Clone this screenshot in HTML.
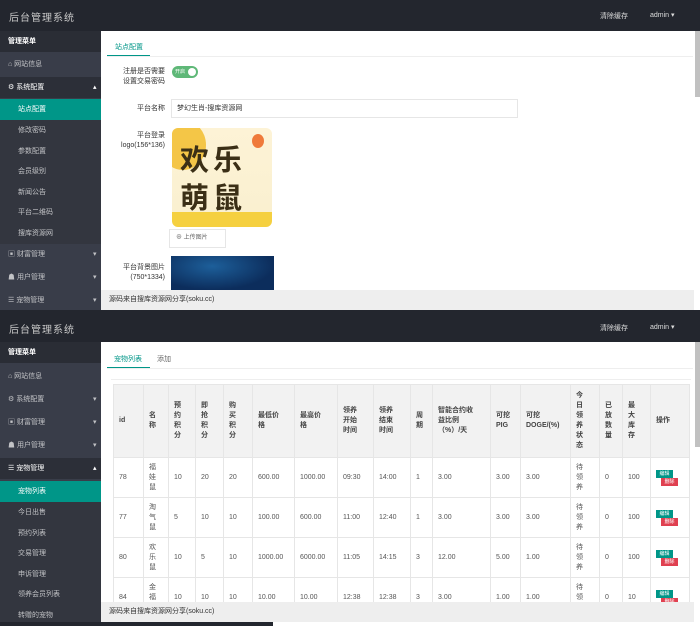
<!DOCTYPE html>
<html><head><meta charset="utf-8"><style>
*{margin:0;padding:0;box-sizing:border-box}
body{width:700px;height:626px;overflow:hidden;background:#fff;font-family:"Liberation Sans","Noto Sans CJK SC",sans-serif;font-size:7px;color:#333;position:relative}
.a{position:absolute}
.hdr{background:#23262e;color:#cfd0d3;left:0;width:700px}
.title{font-size:10px;color:#c8c8c8;letter-spacing:1px}
.side{background:#393d49;left:0;width:101px;color:#c2c3c6}
.side div{position:absolute;left:0;width:101px;height:21px;line-height:21px;padding-left:8px;font-size:7px}
.side .mh{background:#2a2d35;color:#fff;font-weight:bold}
.side .pd{background:#2c2f38;color:#fff}
.side .sub{padding-left:18px;background:#33363f}
.side .on{background:#009688;color:#fff}
.side .ar{position:absolute;right:8px;left:auto;width:0;padding:0}
.foot{background:#eeeeee;left:101px;width:593px;height:20px;line-height:20px;padding-left:8px;font-size:7px;color:#333}
.sb{background:#c1c1c1;width:5px;left:695px}
.lbl{text-align:right;width:70px;left:95px;font-size:7px;line-height:10px;color:#333}
table{border-collapse:collapse;table-layout:fixed;font-size:7px;color:#555}
td,th{border:1px solid #e6e6e6;padding:0 0 0 5px;text-align:left;vertical-align:middle;line-height:10px}
th{background:#f2f2f2;font-weight:bold;color:#444;height:73px}
td{height:40px}
.be{display:block;background:#009688;color:#fff;font-size:5px;width:17px;height:8px;line-height:8px;text-align:center;margin-left:0}
.bd{display:block;background:#e04050;color:#fff;font-size:5px;width:17px;height:8px;line-height:8px;text-align:center;margin-left:5px}
</style></head><body>

<div class="a hdr" style="top:0;height:31px"></div>
<div class="a title" style="left:9px;top:9px">后台管理系统</div>
<div class="a" style="left:600px;top:11px;color:#ddd;font-size:7px">清除缓存</div>
<div class="a" style="left:650px;top:11px;color:#ddd;font-size:7px">admin ▾</div>
<div class="a side" style="top:31px;height:279px">
 <div class="mh" style="top:0">管理菜单</div>
 <div style="top:23px">⌂ 网站信息</div>
 <div class="pd" style="top:46px">⚙ 系统配置<span class="ar" style="top:0">▴</span></div>
 <div class="on sub" style="top:68px">站点配置</div>
 <div class="sub" style="top:89px">修改密码</div>
 <div class="sub" style="top:110px">参数配置</div>
 <div class="sub" style="top:130px">会员级别</div>
 <div class="sub" style="top:151px">新闻公告</div>
 <div class="sub" style="top:171px">平台二维码</div>
 <div class="sub" style="top:192px">搜库资源网</div>
 <div style="top:213px">▣ 财富管理<span class="ar">▾</span></div>
 <div style="top:236px">☗ 用户管理<span class="ar">▾</span></div>
 <div style="top:259px">☰ 宠物管理<span class="ar">▾</span></div>
</div>
<div class="a" style="left:101px;top:31px;width:594px;height:259px;background:#fff"></div>
<div class="a" style="left:115px;top:42px;color:#009688;font-size:7px">站点配置</div>
<div class="a" style="left:107px;top:55px;width:43px;height:2px;background:#009688"></div>
<div class="a" style="left:107px;top:56px;width:586px;height:1px;background:#eee"></div>
<div class="a lbl" style="top:67px">注册是否需要<br>设置交易密码</div>
<div class="a" style="left:172px;top:66px;width:26px;height:12px;border-radius:6px;background:#5fb878;color:#fff;font-size:5px;line-height:12px;padding-left:3px">开启<span style="position:absolute;right:2px;top:2px;width:8px;height:8px;border-radius:50%;background:#fff"></span></div>
<div class="a lbl" style="top:104px">平台名称</div>
<div class="a" style="left:171px;top:99px;width:347px;height:19px;border:1px solid #e6e6e6;padding-left:5px;line-height:17px;font-size:7px">梦幻生肖-搜库资源网</div>
<div class="a lbl" style="top:131px">平台登录<br>logo(156*136)</div>
<div class="a" style="left:172px;top:128px;width:100px;height:99px;border-radius:6px;background:linear-gradient(#fdf3d6 0,#faf0d0 85%,#f5d040 85%);overflow:hidden">
 <div style="position:absolute;left:-12px;top:-8px;width:46px;height:50px;border-radius:50%;background:#f2bd2e;opacity:.85"></div>
 <div style="position:absolute;left:80px;top:6px;width:12px;height:14px;border-radius:50%;background:#ef7a3a"></div>
 <div style="position:absolute;left:8px;top:14px;font-size:29px;line-height:38px;font-weight:bold;color:#3b2f16;letter-spacing:4px">欢乐<br>萌鼠</div>
</div>
<div class="a" style="left:169px;top:229px;width:57px;height:19px;border:1px solid #e6e6e6;font-size:6px;line-height:17px;padding-left:6px;color:#666">⊕ 上传图片</div>
<div class="a lbl" style="top:263px">平台背景图片<br>(750*1334)</div>
<div class="a" style="left:171px;top:256px;width:103px;height:34px;background:radial-gradient(ellipse at 40% 30%,#1d5f9a,#0c2d5c 70%)"></div>
<div class="a foot" style="top:290px">源码来自搜库资源网分享(soku.cc)</div>
<div class="a sb" style="top:31px;height:66px"></div>

<div class="a hdr" style="top:310px;height:32px"></div>
<div class="a title" style="left:9px;top:321px">后台管理系统</div>
<div class="a" style="left:600px;top:323px;color:#ddd;font-size:7px">清除缓存</div>
<div class="a" style="left:650px;top:323px;color:#ddd;font-size:7px">admin ▾</div>
<div class="a side" style="top:342px;height:280px">
 <div class="mh" style="top:0">管理菜单</div>
 <div style="top:24px">⌂ 网站信息</div>
 <div style="top:47px">⚙ 系统配置<span class="ar">▾</span></div>
 <div style="top:70px">▣ 财富管理<span class="ar">▾</span></div>
 <div style="top:93px">☗ 用户管理<span class="ar">▾</span></div>
 <div class="pd" style="top:116px">☰ 宠物管理<span class="ar">▴</span></div>
 <div class="on sub" style="top:139px">宠物列表</div>
 <div class="sub" style="top:160px">今日出售</div>
 <div class="sub" style="top:181px">预约列表</div>
 <div class="sub" style="top:201px">交易管理</div>
 <div class="sub" style="top:222px">申诉管理</div>
 <div class="sub" style="top:242px">领养会员列表</div>
 <div class="sub" style="top:263px">转赠的宠物</div>
</div>
<div class="a" style="left:114px;top:354px;color:#009688;font-size:7px">宠物列表</div>
<div class="a" style="left:157px;top:354px;color:#666;font-size:7px">添加</div>
<div class="a" style="left:107px;top:367px;width:43px;height:2px;background:#009688"></div>
<div class="a" style="left:107px;top:368px;width:586px;height:1px;background:#eee"></div>
<div class="a" style="left:111px;top:379px;width:580px;height:1px;background:#eee"></div>
<div class="a" style="left:113px;top:384px;width:577px;height:218px;overflow:hidden">
<table style="width:576px">
<colgroup><col style="width:30px"><col style="width:25px"><col style="width:27px"><col style="width:28px"><col style="width:29px"><col style="width:42px"><col style="width:43px"><col style="width:36px"><col style="width:37px"><col style="width:22px"><col style="width:58px"><col style="width:30px"><col style="width:50px"><col style="width:29px"><col style="width:23px"><col style="width:28px"><col style="width:39px"></colgroup>
<tr><th>id</th><th>名<br>称</th><th>预<br>约<br>积<br>分</th><th>即<br>抢<br>积<br>分</th><th>购<br>买<br>积<br>分</th><th>最低价<br>格</th><th>最高价<br>格</th><th>领养<br>开始<br>时间</th><th>领养<br>结束<br>时间</th><th>周<br>期</th><th>智能合约收<br>益比例<br>（%）/天</th><th>可挖<br>PIG</th><th>可挖<br>DOGE/(%)</th><th>今<br>日<br>领<br>养<br>状<br>态</th><th>已<br>放<br>数<br>量</th><th>最<br>大<br>库<br>存</th><th>操作</th></tr>
<tr><td>78</td><td>福<br>娃<br>鼠</td><td>10</td><td>20</td><td>20</td><td>600.00</td><td>1000.00</td><td>09:30</td><td>14:00</td><td>1</td><td>3.00</td><td>3.00</td><td>3.00</td><td>待<br>领<br>养</td><td>0</td><td>100</td><td><span class="be">编辑</span><span class="bd">删除</span></td></tr>
<tr><td>77</td><td>淘<br>气<br>鼠</td><td>5</td><td>10</td><td>10</td><td>100.00</td><td>600.00</td><td>11:00</td><td>12:40</td><td>1</td><td>3.00</td><td>3.00</td><td>3.00</td><td>待<br>领<br>养</td><td>0</td><td>100</td><td><span class="be">编辑</span><span class="bd">删除</span></td></tr>
<tr><td>80</td><td>欢<br>乐<br>鼠</td><td>10</td><td>5</td><td>10</td><td>1000.00</td><td>6000.00</td><td>11:05</td><td>14:15</td><td>3</td><td>12.00</td><td>5.00</td><td>1.00</td><td>待<br>领<br>养</td><td>0</td><td>100</td><td><span class="be">编辑</span><span class="bd">删除</span></td></tr>
<tr><td>84</td><td>金<br>福<br>鼠</td><td>10</td><td>10</td><td>10</td><td>10.00</td><td>10.00</td><td>12:38</td><td>12:38</td><td>3</td><td>3.00</td><td>1.00</td><td>1.00</td><td>待<br>领<br>养</td><td>0</td><td>10</td><td><span class="be">编辑</span><span class="bd">删除</span></td></tr>
</table></div>
<div class="a foot" style="top:602px">源码来自搜库资源网分享(soku.cc)</div>
<div class="a sb" style="top:342px;height:105px"></div>
<div class="a" style="left:0;top:622px;width:273px;height:4px;background:#23262e"></div>
</body></html>
